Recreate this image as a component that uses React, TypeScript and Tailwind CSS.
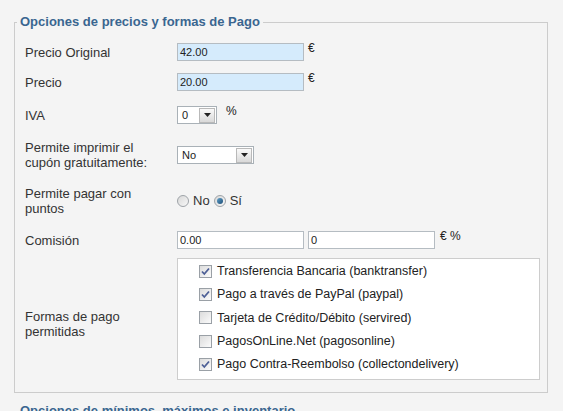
import React from 'react';

const font = { fontFamily: '"Liberation Sans", Arial, sans-serif' };

const Arrow: React.FC = () => (
  <span className="flex h-[15px] w-[16px] items-center justify-center border border-[#b9b9b9] bg-gradient-to-b from-[#fafafa] to-[#d9d9d9]">
    <svg width="7" height="4" viewBox="0 0 7 4">
      <path d="M0 0h7L3.5 4z" fill="#222" />
    </svg>
  </span>
);

const Select: React.FC<{ value: string; width: string }> = ({ value, width }) => (
  <div
    className={`flex h-[18px] ${width} items-center justify-between border border-[#a9b1b7] bg-white pl-[4px] pr-[1px] text-[11px] text-[#222]`}
  >
    <span>{value}</span>
    <Arrow />
  </div>
);

const TextInput: React.FC<{ value: string; blue?: boolean }> = ({ value, blue }) => (
  <div
    className={`flex h-[18px] w-[127px] items-center border border-[#b5bcc2] pl-[2px] text-[11px] text-[#222] ${
      blue ? 'bg-[#d5ebfc]' : 'bg-white'
    }`}
  >
    {value}
  </div>
);

const Radio: React.FC<{ checked?: boolean }> = ({ checked }) => (
  <span className="flex h-[12px] w-[12px] items-center justify-center rounded-full border border-[#9ea3a8] bg-gradient-to-br from-[#d8d8d8] to-[#f8f8f8]">
    {checked && <span className="h-[6px] w-[6px] rounded-full bg-gradient-to-br from-[#5fa0c8] to-[#1f4f78]" />}
  </span>
);

const Checkbox: React.FC<{ checked?: boolean }> = ({ checked }) => (
  <span className="flex h-[13px] w-[13px] items-center justify-center border border-[#9aa0a6] bg-gradient-to-br from-[#dcdcdc] to-[#fbfbfb]">
    {checked && (
      <svg width="9" height="9" viewBox="0 0 9 9">
        <path d="M1 4.5l2.3 2.5L8 1.5" stroke="#4d5f96" strokeWidth="1.8" fill="none" />
      </svg>
    )}
  </span>
);

const Label: React.FC<{ children: React.ReactNode }> = ({ children }) => (
  <div className="w-[162px] shrink-0 pl-[10px] pr-[22px] text-[13px] leading-[15px] text-[#333]">{children}</div>
);

const payments = [
  { name: 'Transferencia Bancaria (banktransfer)', checked: true },
  { name: 'Pago a través de PayPal (paypal)', checked: true },
  { name: 'Tarjeta de Crédito/Débito (servired)', checked: false },
  { name: 'PagosOnLine.Net (pagosonline)', checked: false },
  { name: 'Pago Contra-Reembolso (collectondelivery)', checked: true },
];

export default function App() {
  return (
    <div className="h-[411px] w-[563px] overflow-hidden bg-[#f4f4f4] pt-[14px]" style={font}>
      <fieldset className="ml-[14px] w-[534px] border border-[#cccccc] pb-[12px] pt-[8px]">
        <legend className="ml-[2px] px-[3px] text-[13px] font-bold leading-[16px] text-[#3a6690]">
          Opciones de precios y formas de Pago
        </legend>

        <div className="flex h-[28px] items-center">
          <Label>Precio Original</Label>
          <TextInput value="42.00" blue />
          <span className="ml-[4px] self-start pt-[1px] text-[12px] text-[#222]">€</span>
        </div>

        <div className="mt-[2px] flex h-[28px] items-center">
          <Label>Precio</Label>
          <TextInput value="20.00" blue />
          <span className="ml-[4px] self-start pt-[1px] text-[12px] text-[#222]">€</span>
        </div>

        <div className="mt-[5px] flex h-[28px] items-center">
          <Label>IVA</Label>
          <Select value="0" width="w-[40px]" />
          <span className="ml-[9px] self-start pt-[1px] text-[12px] text-[#222]">%</span>
        </div>

        <div className="mt-[7px] flex h-[38px] items-center">
          <Label>Permite imprimir el cupón gratuitamente:</Label>
          <Select value="No" width="w-[77px]" />
        </div>

        <div className="mt-[7px] flex h-[40px] items-center">
          <Label>Permite pagar con puntos</Label>
          <div className="flex items-center text-[13px] text-[#333]">
            <Radio />
            <span className="ml-[4px] mr-[4px]">No</span>
            <Radio checked />
            <span className="ml-[4px]">Sí</span>
          </div>
        </div>

        <div className="mt-[5px] flex h-[28px] items-center">
          <Label>Comisión</Label>
          <TextInput value="0.00" />
          <span className="ml-[4px]">
            <TextInput value="0" />
          </span>
          <span className="ml-[5px] self-start pt-[1px] text-[12px] text-[#222]">€ %</span>
        </div>

        <div className="mt-[4px] flex items-center">
          <Label>
            <div className="pt-[10px]">Formas de pago permitidas</div>
          </Label>
          <div className="w-[363px] border border-[#cdcdcd] bg-white pb-[3px] pl-[21px] pt-[1px]">
            {payments.map((p) => (
              <div key={p.name} className="flex h-[23.2px] items-center text-[12.5px] text-[#222]">
                <Checkbox checked={p.checked} />
                <span className="ml-[5px]">{p.name}</span>
              </div>
            ))}
          </div>
        </div>
      </fieldset>

      <div className="ml-[20px] mt-[10px] text-[13px] font-bold leading-[16px] text-[#3a6690]">
        Opciones de mínimos, máximos e inventario
      </div>
    </div>
  );
}
